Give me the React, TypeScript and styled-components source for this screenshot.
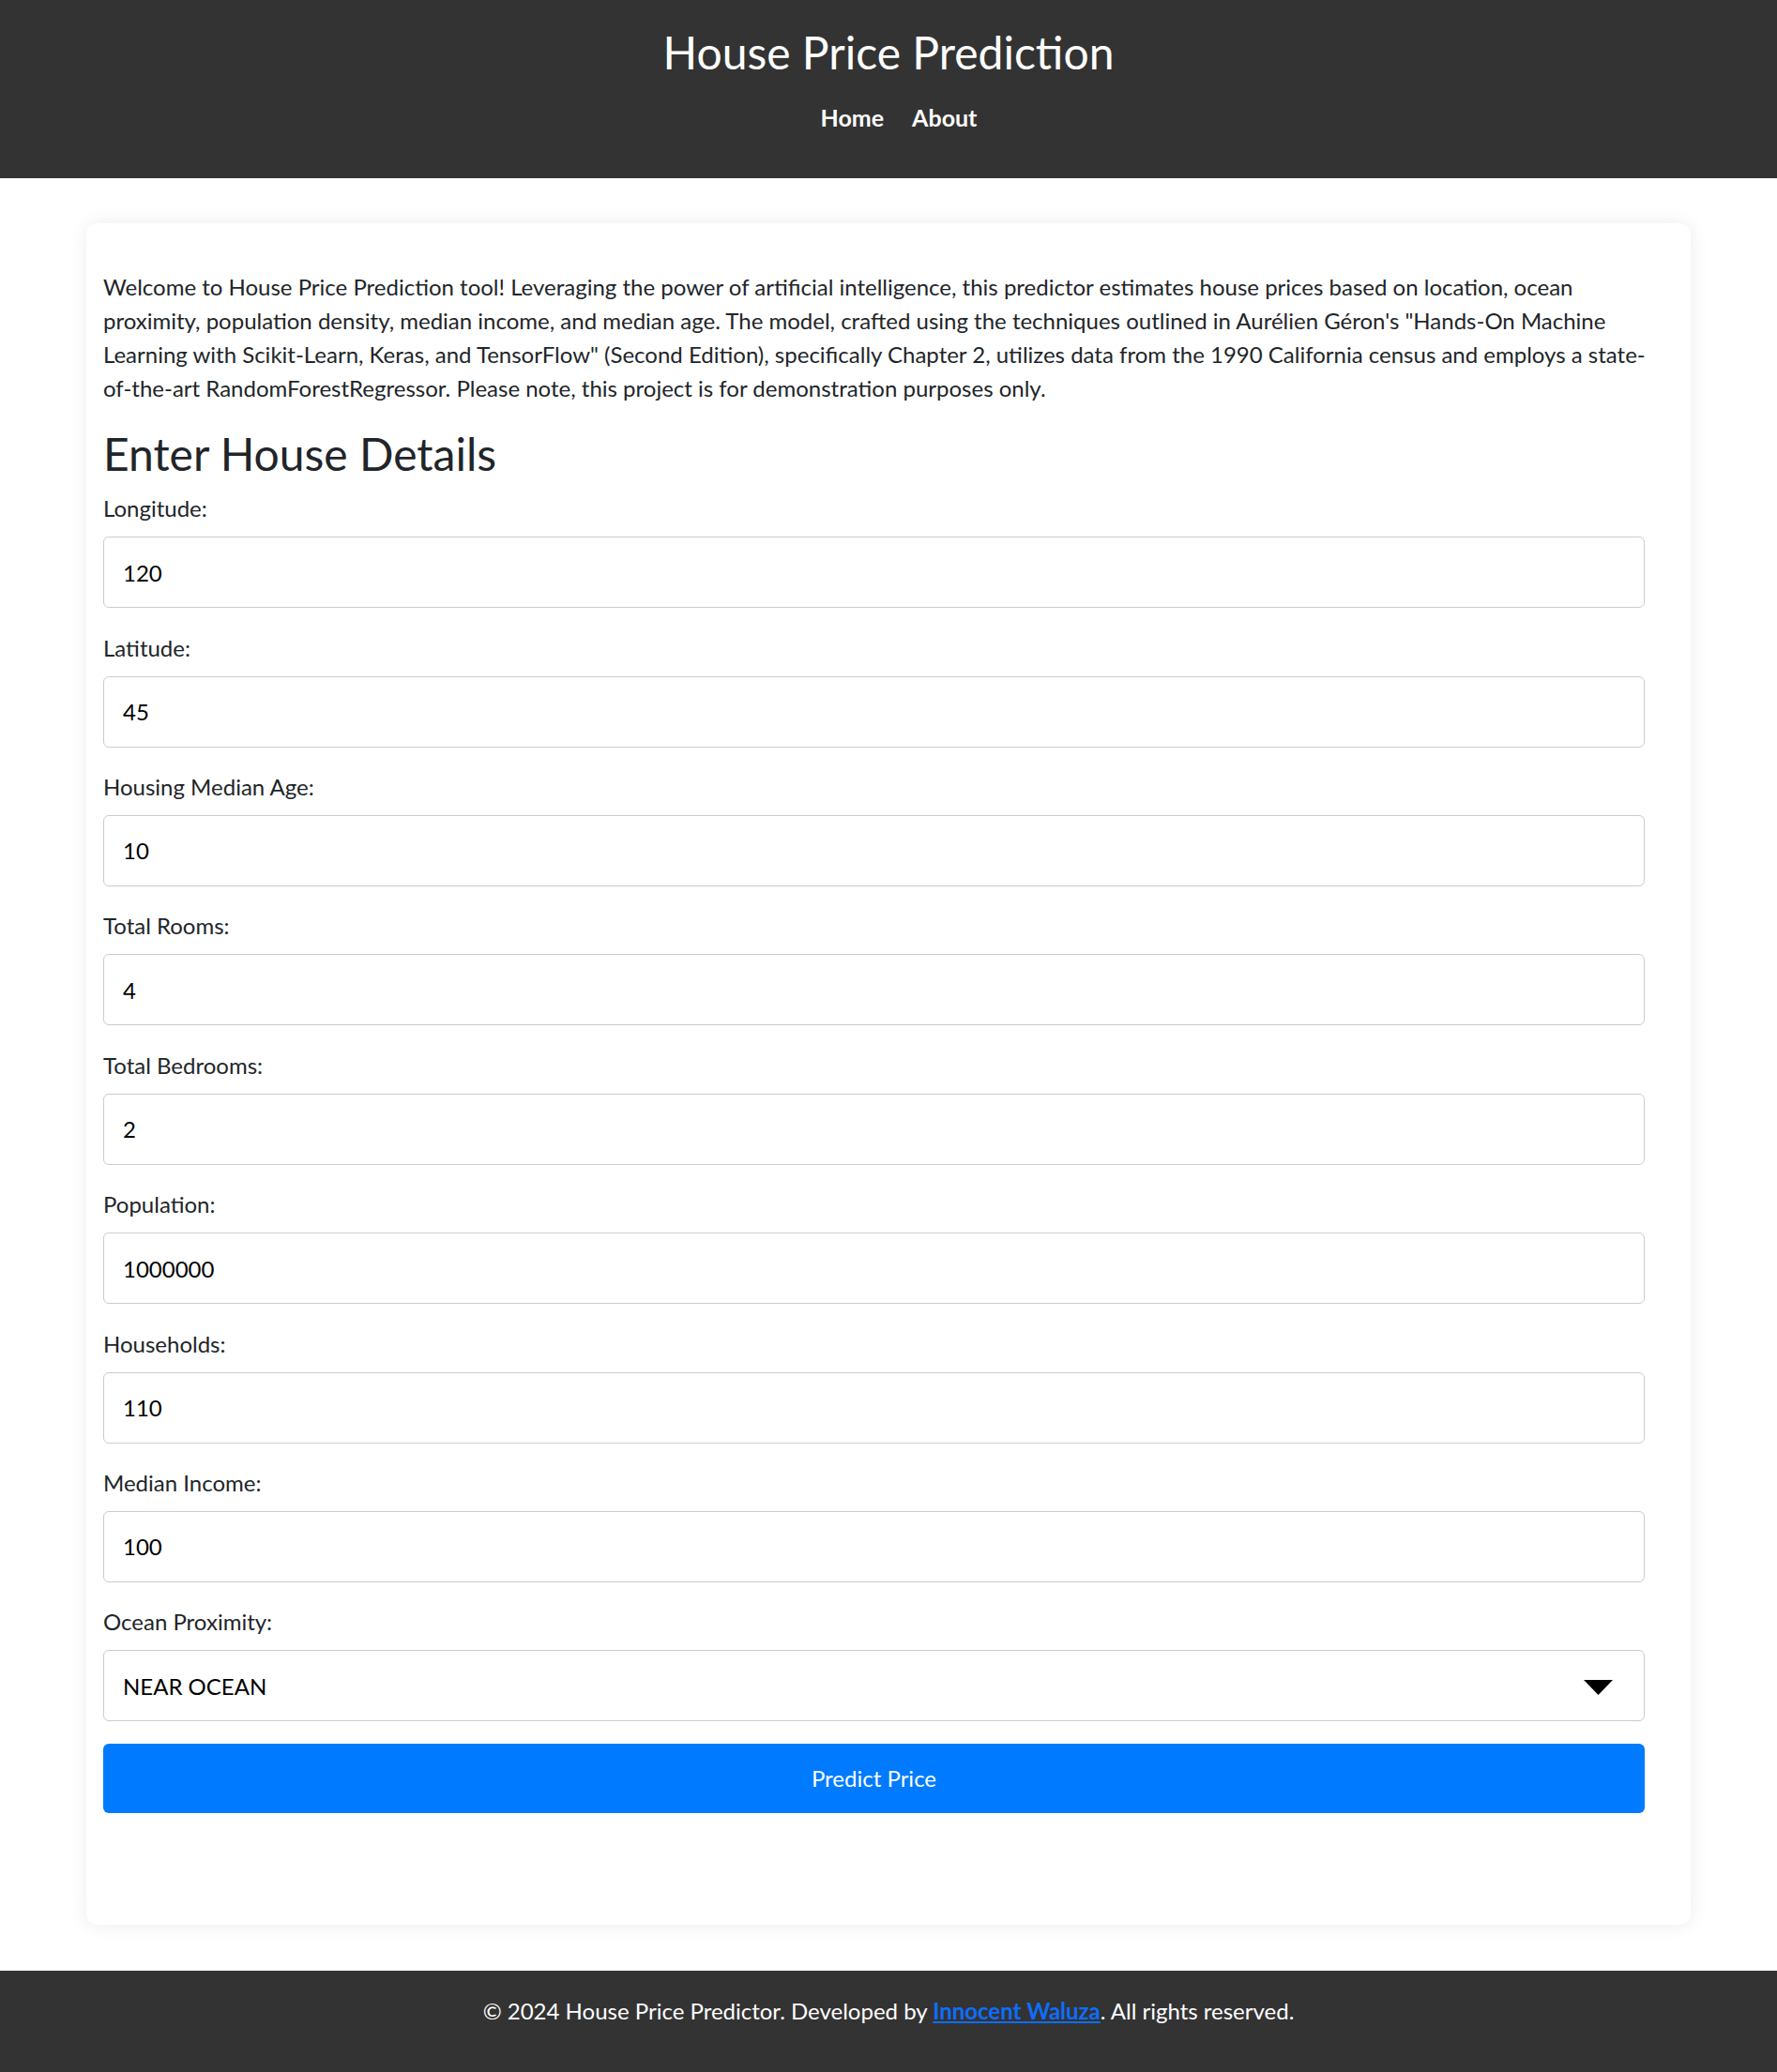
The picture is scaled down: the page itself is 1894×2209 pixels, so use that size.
import React from "react";
import styled, { createGlobalStyle } from "styled-components";

const GlobalStyle = createGlobalStyle`
  * { box-sizing: border-box; }
  body {
    margin: 0;
    background: #fff;
    font-family: "Segoe UI", Lato, "Noto Sans", sans-serif;
    font-size: 24px;
    line-height: 1.5;
    color: #212529;
  }
`;

const Page = styled.div`
  display: flex;
  flex-direction: column;
  min-height: 100vh;
`;

const Header = styled.header`
  background: #333;
  color: #fff;
  text-align: center;
  padding: 27px 0 47px;
`;

const Title = styled.h1`
  margin: 0;
  font-size: 48px;
  font-weight: 400;
  line-height: 1.2;
`;

const Nav = styled.nav`
  display: flex;
  justify-content: center;
  gap: 30px;
  margin-top: 22px;
  padding-left: 22px;
`;

const NavLink = styled.a`
  color: #fff;
  font-size: 25px;
  font-weight: 700;
  text-decoration: none;
  line-height: 36px;
`;

const Main = styled.main`
  padding: 48px 92px 48px;
`;

const Card = styled.section`
  background: #fff;
  border-radius: 12px;
  box-shadow: 0 0 20px rgba(0, 0, 0, 0.08);
  padding: 50px 26px 119px 18px;
`;

const Intro = styled.p`
  margin: 0;
`;

const Heading = styled.h2`
  margin: 23px 0 12px;
  font-size: 48px;
  font-weight: 400;
  line-height: 1.2;
`;

const Form = styled.form`
  display: flex;
  flex-direction: column;
  margin-right: 23px;
`;

const Field = styled.div`
  display: flex;
  flex-direction: column;
  gap: 12px;
  margin-bottom: 24.4px;
`;

const Label = styled.label`
  line-height: 36px;
`;

const controlStyle = `
  width: 100%;
  height: 76px;
  padding: 0 20px;
  border: 1px solid #ccc;
  border-radius: 6px;
  background: #fff;
  color: #000;
  font-family: inherit;
  font-size: 24px;
  outline: none;
`;

const Input = styled.input`
  ${controlStyle}
`;

const SelectWrap = styled.div`
  position: relative;
`;

const Select = styled.select`
  ${controlStyle}
  appearance: none;
  -webkit-appearance: none;
`;

const Caret = styled.svg`
  position: absolute;
  right: 34px;
  top: 32px;
  pointer-events: none;
`;

const Button = styled.button`
  height: 74px;
  width: 100%;
  margin-top: -1px;
  border: none;
  border-radius: 6px;
  background: #007bff;
  color: #fff;
  font-family: inherit;
  font-size: 24px;
  cursor: pointer;
`;

const Footer = styled.footer`
  background: #333;
  color: #fff;
  text-align: center;
  padding: 25px 0 47px;
  margin-top: auto;
`;

const FooterLink = styled.a`
  color: #0d6efd;
  font-weight: 700;
`;

const fields = [
  { id: "longitude", label: "Longitude:", value: "120" },
  { id: "latitude", label: "Latitude:", value: "45" },
  { id: "age", label: "Housing Median Age:", value: "10" },
  { id: "rooms", label: "Total Rooms:", value: "4" },
  { id: "bedrooms", label: "Total Bedrooms:", value: "2" },
  { id: "population", label: "Population:", value: "1000000" },
  { id: "households", label: "Households:", value: "110" },
  { id: "income", label: "Median Income:", value: "100" },
];

export default function App() {
  return (
    <Page>
      <GlobalStyle />
      <Header>
        <Title>House Price Prediction</Title>
        <Nav>
          <NavLink href="#">Home</NavLink>
          <NavLink href="#">About</NavLink>
        </Nav>
      </Header>
      <Main>
        <Card>
          <Intro>
            Welcome to House Price Prediction tool! Leveraging the power of artificial intelligence, this
            predictor estimates house prices based on location, ocean proximity, population density, median
            income, and median age. The model, crafted using the techniques outlined in Aurélien Géron's
            "Hands-On Machine Learning with Scikit-Learn, Keras, and TensorFlow" (Second Edition),
            specifically Chapter 2, utilizes data from the 1990 California census and employs a
            state-of-the-art RandomForestRegressor. Please note, this project is for demonstration purposes
            only.
          </Intro>
          <Heading>Enter House Details</Heading>
          <Form onSubmit={(e) => e.preventDefault()}>
            {fields.map((f) => (
              <Field key={f.id}>
                <Label htmlFor={f.id}>{f.label}</Label>
                <Input id={f.id} type="text" defaultValue={f.value} />
              </Field>
            ))}
            <Field>
              <Label htmlFor="ocean">Ocean Proximity:</Label>
              <SelectWrap>
                <Select id="ocean" defaultValue="NEAR OCEAN">
                  <option>&lt;1H OCEAN</option>
                  <option>INLAND</option>
                  <option>ISLAND</option>
                  <option>NEAR BAY</option>
                  <option>NEAR OCEAN</option>
                </Select>
                <Caret width="31" height="16" viewBox="0 0 31 16">
                  <path d="M0 0 H31 L15.5 16 Z" fill="#000" />
                </Caret>
              </SelectWrap>
            </Field>
            <Button type="submit">Predict Price</Button>
          </Form>
        </Card>
      </Main>
      <Footer>
        © 2024 House Price Predictor. Developed by <FooterLink href="#">Innocent Waluza</FooterLink>. All rights
        reserved.
      </Footer>
    </Page>
  );
}
